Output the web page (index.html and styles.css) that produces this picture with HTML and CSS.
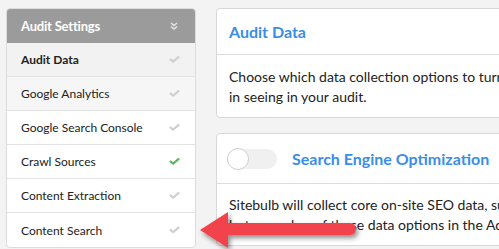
FILE: index.html
```html
<!DOCTYPE html>
<html lang="en">
<head>
    <meta charset="UTF-8">
    <title>Audit Settings</title>
    <link rel="stylesheet" href="styles.css">
</head>
<body>
    <div class="page">
        <div class="settings-nav">
            <div class="nav-header">
                <span>Audit Settings</span>
                <svg class="chevrons" width="8" height="8" viewBox="0 0 8 8">
                    <path d="M1 1 L4 3.5 L7 1 M1 4.5 L4 7 L7 4.5" fill="none" stroke="#e4e4e4" stroke-width="1.6"/>
                </svg>
            </div>
            <div class="nav-item active">Audit Data <span class="tick"></span></div>
            <div class="nav-item hover">Google Analytics <span class="tick"></span></div>
            <div class="nav-item">Google Search Console <span class="tick"></span></div>
            <div class="nav-item">Crawl Sources <span class="tick on"></span></div>
            <div class="nav-item">Content Extraction <span class="tick"></span></div>
            <div class="nav-item">Content Search <span class="tick"></span></div>
        </div>

        <div class="content">
            <div class="panel">
                <div class="panel-header">
                    <h2>Audit Data</h2>
                </div>
                <div class="panel-body">
                    <p>Choose which data collection options to turn on, depending on what you are interested<br>in seeing in your audit.</p>
                </div>
            </div>

            <div class="panel">
                <div class="panel-header">
                    <span class="toggle"><span class="knob"></span></span>
                    <h2>Search Engine Optimization</h2>
                </div>
                <div class="panel-body">
                    <p>Sitebulb will collect core on-site SEO data, such as titles and meta descriptions,<br>but a number of these data options in the Advanced settings can be turned on.</p>
                </div>
            </div>
        </div>
    </div>

    <!-- arrow pointing at Content Search -->
    <svg class="pointer" width="180" height="60" viewBox="0 0 180 60">
        <defs>
            <filter id="shadow" x="-20%" y="-40%" width="140%" height="200%">
                <feDropShadow dx="2" dy="3" stdDeviation="2.5" flood-color="#000" flood-opacity="0.45"/>
            </filter>
        </defs>
        <g filter="url(#shadow)">
            <path d="M2 30 L30 12 L30 23 L152 23 Q158 23.5 158 29 Q158 34.5 152 35 L30 35 L30 48 Z" fill="#f2434b"/>
        </g>
    </svg>
</body>
</html>
```

FILE: styles.css
```css
* {
    margin: 0;
    padding: 0;
    box-sizing: border-box;
}

body {
    background: #f3f3f3;
    font-family: Lato, 'Open Sans', sans-serif;
    color: #222;
    overflow: hidden;
    height: 249px;
}

.page {
    display: flex;
    gap: 20px;
    padding: 8px 0 0 6px;
}

/* Menu de configurações */
.settings-nav {
    flex: 0 0 190px;
    border: 1px solid #dcdcdc;
    border-radius: 4px;
    background: #fff;
    overflow: hidden;
}

.nav-header {
    display: flex;
    align-items: center;
    justify-content: space-between;
    height: 34px;
    padding: 0 17px 0 14px;
    background: #9b9b9b;
    color: #fff;
    font-size: 13px;
    font-weight: 700;
    letter-spacing: -0.2px;
}

.nav-item {
    display: flex;
    align-items: center;
    justify-content: space-between;
    height: 34px;
    padding: 0 15px 0 14px;
    border-bottom: 1px solid #e3e3e3;
    font-size: 12px;
    color: #222;
}

.nav-item:last-child {
    border-bottom: none;
}

.nav-item.active {
    background: #f2f2f2;
    font-weight: 700;
}

.nav-item.hover {
    background: #f6f6f6;
}

.tick {
    width: 11px;
    height: 9px;
    background: #cfcfcf;
    clip-path: polygon(0 52%, 16% 36%, 38% 58%, 84% 8%, 100% 24%, 38% 90%);
}

.tick.on {
    background: #5cb85c;
}

/* Painéis */
.content {
    display: flex;
    flex-direction: column;
    gap: 15px;
    flex: 0 0 640px;
}

.panel {
    background: #fff;
    border: 1px solid #d8d8d8;
    border-radius: 4px;
}

.panel-header {
    display: flex;
    align-items: center;
    height: 46px;
    padding: 0 12px;
    border-bottom: 1px solid #dcdcdc;
}

.panel + .panel .panel-header {
    height: 50px;
    padding-left: 10px;
}

.panel-header h2 {
    font-size: 16px;
    font-weight: 700;
    color: #3a8ee6;
}

.panel-body {
    padding: 12px 12px 10px;
    font-size: 14px;
    line-height: 20px;
    color: #222;
    white-space: nowrap;
}

.panel + .panel .panel-body {
    padding-top: 11px;
}

/* Toggle */
.toggle {
    display: flex;
    align-items: center;
    width: 50px;
    height: 20px;
    margin-right: 15px;
    border-radius: 10px;
    background: #f0f0f0;
}

.knob {
    width: 22px;
    height: 22px;
    border-radius: 50%;
    background: #fff;
    border: 1px solid #cfcfcf;
}

/* Seta */
.pointer {
    position: absolute;
    left: 198px;
    top: 200px;
}
```
